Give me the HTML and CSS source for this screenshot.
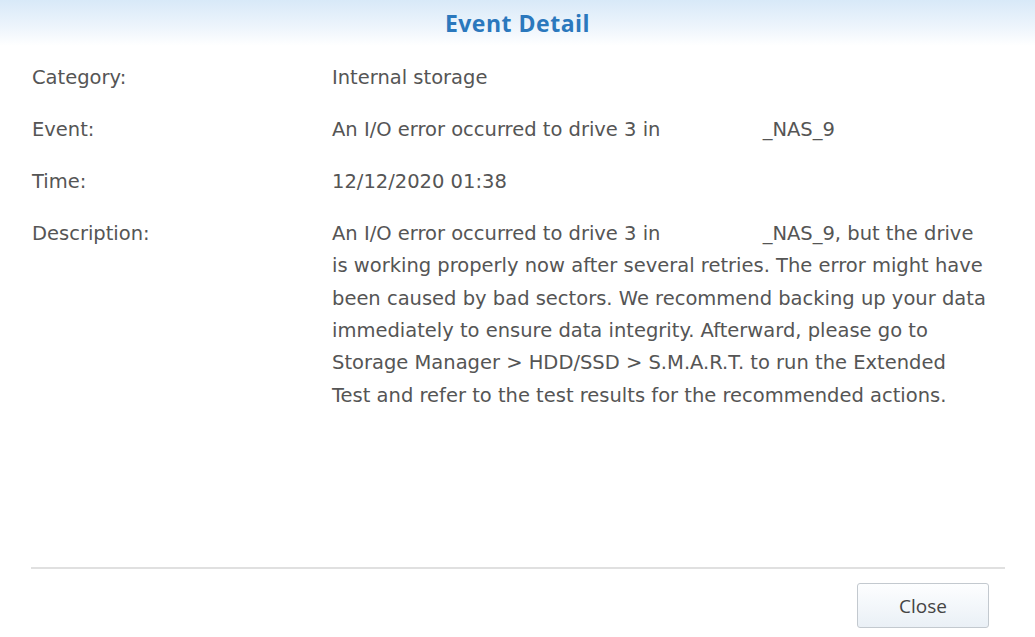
FILE: index.html
```html
<!DOCTYPE html>
<html lang="en">
<head>
  <meta charset="UTF-8">
  <title>Event Detail</title>
  <link rel="stylesheet" href="styles.css">
</head>
<body>
  <div class="dialog">
    <div class="header">Event Detail</div>

    <div class="details">
      <div class="label">Category:</div>
      <div class="value">Internal storage</div>

      <div class="label">Event:</div>
      <div class="value">An I/O error occurred to drive 3 in <span class="hidden-name"></span>_NAS_9</div>

      <div class="label">Time:</div>
      <div class="value">12/12/2020 01:38</div>

      <div class="label">Description:</div>
      <div class="value desc">An I/O error occurred to drive 3 in <span class="hidden-name"></span>_NAS_9, but the drive<br>is working properly now after several retries. The error might have been caused by bad sectors. We recommend backing up your data immediately to ensure data integrity. Afterward, please go to Storage Manager &gt; HDD/SSD &gt; S.M.A.R.T. to run the Extended Test and refer to the test results for the recommended actions.</div>
    </div>

    <div class="footer">
      <button class="close-btn">Close</button>
    </div>
  </div>
</body>
</html>
```

FILE: styles.css
```css
html, body {
  margin: 0;
  padding: 0;
  background: #fff;
}
body {
  font-family: 'DejaVu Sans', Verdana, sans-serif;
  color: #555;
  width: 1035px;
  height: 637px;
  overflow: hidden;
}
.dialog {
  display: flex;
  flex-direction: column;
  height: 637px;
}
.header {
  height: 46px;
  line-height: 46px;
  text-align: center;
  font-family: 'Open Sans', 'Liberation Sans', sans-serif;
  font-weight: bold;
  font-size: 23px;
  letter-spacing: 0.5px;
  color: #2b78bd;
  background: linear-gradient(to bottom, #d8e9f8 0%, #eef5fc 60%, #ffffff 100%);
}
.details {
  display: grid;
  grid-template-columns: 300px 656px;
  row-gap: 19.5px;
  padding: 16px 0 0 32px;
  font-size: 19.5px;
  line-height: 32.4px;
}
.label {
  color: #555;
}
.value {
  color: #555;
}
.hidden-name {
  display: inline-block;
  width: 96px;
}
.footer {
  margin: auto 30px 0 31px;
  border-top: 2px solid #e0e0e0;
  display: flex;
  justify-content: flex-end;
  padding: 14px 16px 9px 0;
}
.close-btn {
  width: 132px;
  height: 45px;
  font-family: 'Open Sans', 'Liberation Sans', sans-serif;
  font-size: 19px;
  color: #444;
  background: linear-gradient(to bottom, #fdfeff, #eaf0f6);
  border: 1px solid #c3c9cf;
  border-radius: 3px;
  cursor: pointer;
}
```
